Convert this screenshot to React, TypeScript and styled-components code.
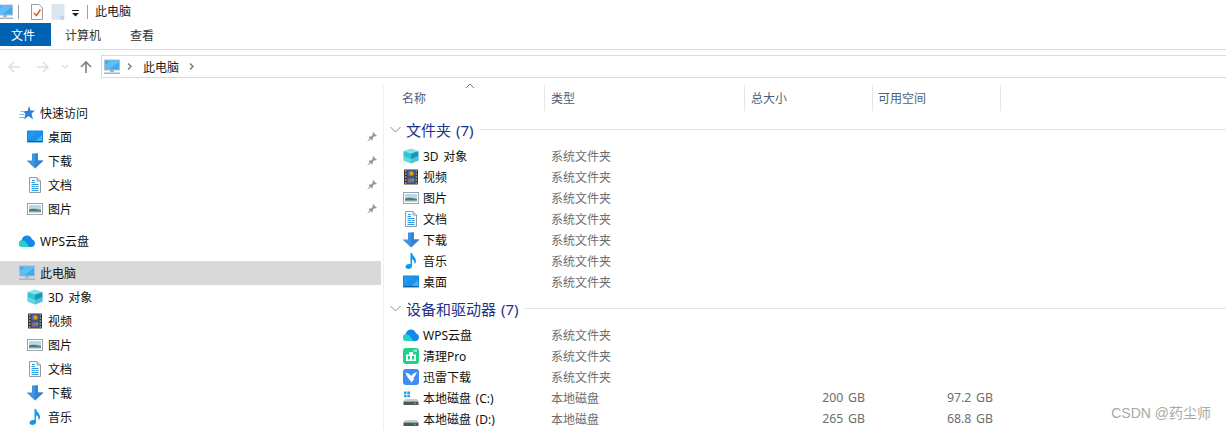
import React from "react";
import styled, { createGlobalStyle } from "styled-components";

const Global = createGlobalStyle`
  html, body { margin: 0; padding: 0; background: #fff; height: 430px; overflow: hidden; }
  body { font-family: "Noto Sans", "Noto Sans CJK SC", sans-serif; font-size: 12px; color: #1a1a1a; }
`;

const Page = styled.div`
  position: relative; width: 1226px; height: 430px; overflow: hidden; background: #fff;
  display: flex; flex-direction: column;
`;
const TitleBar = styled.div`
  height: 23px; display: flex; align-items: center; flex: none;
`;
const TitleSep = styled.span<{ $gap: number }>`
  width: 1px; height: 14px; background: #a0a0a0; margin-left: ${p => p.$gap}px; flex: none;
`;
const QuickIcon = styled.span<{ $gap: number }>`
  margin-left: ${p => p.$gap}px; display: flex; flex: none;
`;
const TitleText = styled.span`
  margin-left: 7px; line-height: 23px; color: #1a1a1a;
`;
const TabBar = styled.div`
  height: 23px; display: flex; flex: none; align-items: stretch;
`;
const FileTab = styled.div`
  width: 51px; box-sizing: border-box; padding-left: 11px; background: #0063b1; color: #fff; display: flex; align-items: center;
`;
const Tab = styled.div<{ $gap: number }>`
  margin-left: ${p => p.$gap}px; display: flex; align-items: center; color: #333;
`;
const RibbonLine = styled.div`
  flex: none; height: 1px; margin-top: 3px; background: #dedede;
`;
const AddressRow = styled.div`
  flex: none; height: 23px; margin-top: 5px; display: flex; align-items: center; 
`;
const NavButton = styled.span<{ $w: number }>`
  width: ${p => p.$w}px; display: flex; justify-content: center; flex: none;
`;
const AddressBox = styled.div`
  flex: 1; height: 23px; box-sizing: border-box; border: 1px solid #d9d9d9; border-right: 0;
  display: flex; align-items: center; padding-left: 2px; margin-left: 0;
`;
const AddressSpacer = styled.span`
  width: 5px; flex: none;
`;
const Crumb = styled.span`
  color: #1a1a1a; margin: 0 8px 0 9px;
`;
const Body = styled.div`
  flex: 1; display: flex; min-height: 0;
`;
const Sidebar = styled.div`
  width: 381px; flex: none; padding-top: 23px; display: flex; flex-direction: column;
`;
const NavGroup = styled.div`
  margin-bottom: 8px; flex: none;
`;
const NavRow = styled.div<{ $level: number; $selected?: boolean }>`
  height: 24px; display: flex; align-items: center; gap: 5px;
  padding-left: ${p => (p.$level ? 27 : 19)}px;
  padding-right: 3px;
  word-spacing: 1.5px;
  background: ${p => (p.$selected ? "#d9d9d9" : "transparent")};
`;
const NavLabel = styled.span`
  flex: 1; color: #111; white-space: nowrap;
`;
const Pane = styled.div`
  flex: 1; margin-left: 2px; margin-top: 7px; border-left: 1px solid #f0f0f0; position: relative;
`;
const Header = styled.div`
  height: 26px; display: flex; padding-left: 18px;
`;
const HeaderCell = styled.div<{ $w: number; $pad?: number }>`
  position: relative; width: ${p => p.$w}px; box-sizing: border-box; padding-left: ${p => p.$pad ?? 5}px;
  border-right: 1px solid #e5e5e5; color: #4c607a; line-height: 28px; white-space: nowrap;
`;
const SortCaret = styled.svg`
  position: absolute; left: 63px; top: -2px;
`;
const GroupHead = styled.div<{ $mt: number }>`
  margin-top: ${p => p.$mt}px; height: 24px; display: flex; align-items: center; padding-left: 6px;
`;
const GroupTitle = styled.span`
  font-size: 15px; color: #1e3287; margin-left: 5px; white-space: nowrap; word-spacing: 1px;
`;
const GroupLine = styled.span`
  flex: 1; height: 1px; background: #e5e5e5; margin-left: 7px;
`;
const FileRows = styled.div<{ $mt: number }>`
  margin-top: ${p => p.$mt}px;
`;
const FileRow = styled.div`
  height: 21px; display: grid; grid-template-columns: 148px 200px 114px 128px;
  padding-left: 19px; align-items: center;
`;
const FileName = styled.span`
  display: flex; align-items: center; gap: 4px; color: #111; white-space: nowrap; word-spacing: 1.5px;
`;
const FileMeta = styled.span<{ $right?: boolean }>`
  color: #6d6d6d; text-align: ${p => (p.$right ? "right" : "left")}; white-space: nowrap; word-spacing: 1.5px;
  font-size: ${p => (p.$right ? "12.3px" : "12px")};
`;
const Watermark = styled.div`
  position: absolute; right: 15px; top: 403px; font-size: 14px; line-height: 20px; color: #a8a8a8;
  font-family: "Liberation Sans", "Noto Sans CJK SC", sans-serif;
`;

const Ico = ({ size = 16, children }: { size?: number; children: React.ReactNode }) => (
  <svg width={size} height={size} viewBox="0 0 16 16" style={{ flex: "none", display: "block" }}>{children}</svg>
);

const Monitor = () => (
  <Ico>
    <rect x="0.5" y="1" width="15" height="10" fill="#3fa9ee" stroke="#a9c2d6" />
    <path d="M1 6 L6 1.5 H15 V3 L5 10.5 H1Z" fill="#62bdf3" />
    <rect x="6" y="11" width="4" height="2" fill="#9fb4c6" />
    <rect x="0" y="13.5" width="16" height="1.5" fill="#a4b4c6" />
  </Ico>
);
const Desktop = () => (
  <Ico>
    <rect x="0" y="1.5" width="16" height="12" rx="0.5" fill="#1386dc" />
    <rect x="1" y="2.5" width="14" height="9.5" fill="#1f9cf0" />
    <path d="M1 12 L10 2.5 H15 V12Z" fill="#1a90e8" />
    <path d="M9 12 L15 6 V12Z" fill="#45b4f5" />
    <rect x="1" y="12" width="14" height="1" fill="#0d5fa3" />
  </Ico>
);
const Down = () => (
  <Ico>
    <path d="M5 0.5 H11 V7.5 H16.5 L8 15.5 L-0.5 7.5 H5Z" fill="#3f92e0" />
    <path d="M8 0.5 H11 V7.5 H16.5 L8 15.5Z" fill="#3584d2" />
  </Ico>
);
const Doc = () => (
  <Ico>
    <path d="M2.5 0.5 H10 L13.5 4 V15.5 H2.5Z" fill="#fbfbfb" stroke="#8f9aa3" />
    <path d="M10 0.5 V4 H13.5" fill="#e0e0e0" stroke="#8f9aa3" />
    <path d="M5 3.5 H8 M4.5 5.5 H8 M4.5 7.5 H11.5 M4.5 9.5 H8 M9 9.5 H11.5 M4.5 11.5 H11.5 M4.5 13.5 H11.5" stroke="#2f9ae0" strokeWidth="1" />
  </Ico>
);
const Picture = () => (
  <Ico>
    <rect x="0.5" y="2.5" width="15" height="11" fill="#fff" stroke="#9aa3aa" />
    <rect x="2" y="4" width="12" height="8" fill="#b9d8ee" />
    <path d="M2 9 C5 7 8 8 14 9 V12 H2Z" fill="#4f7a6c" />
    <rect x="2" y="10.5" width="12" height="1.5" fill="#c3d2da" />
  </Ico>
);
const Cube = () => (
  <Ico>
    <path d="M8 0.5 L15.5 3 L8 5.5 L0.5 3Z" fill="#7fe3ea" />
    <path d="M0.5 3 L8 5.5 V15.5 L0.5 12.5Z" fill="#30c4d6" />
    <path d="M15.5 3 L8 5.5 V15.5 L15.5 12.5Z" fill="#1698bd" />
    <path d="M0.5 8 L8 11 L15.5 8 V12.5 L8 15.5 L0.5 12.5Z" fill="#a5edf0" opacity="0.45" />
  </Ico>
);
const Film = () => (
  <Ico>
    <rect x="1" y="0.5" width="14" height="15" fill="#3a3a3a" />
    <path d="M2 2 H3.5 M2 5 H3.5 M2 8 H3.5 M2 11 H3.5 M2 14 H3.5 M12.5 2 H14 M12.5 5 H14 M12.5 8 H14 M12.5 11 H14 M12.5 14 H14" stroke="#ddd" strokeWidth="1.2" />
    <rect x="4.5" y="1.5" width="7" height="6" fill="#3f6cc4" />
    <rect x="4.5" y="8.5" width="7" height="6" fill="#3f6cc4" />
    <circle cx="8.5" cy="4.5" r="2" fill="#e0a21c" />
    <circle cx="7" cy="11.5" r="2" fill="#d4532c" />
    <circle cx="10" cy="11" r="1.4" fill="#5da745" />
  </Ico>
);
const Note = () => (
  <Ico>
    <path d="M7.5 0 H9 C9.5 3 13 4.5 13 8 C13 9.5 12.3 10.5 11.5 11 C11.8 8.5 10.5 6.8 9 6.3 V13 C9 14.7 7.3 16 5.2 16 C3.5 16 2.5 15 2.5 13.8 C2.5 12.2 4.2 11 6 11 C6.6 11 7.1 11.1 7.5 11.3Z" fill="#0d9af0" />
  </Ico>
);
const Star = () => (
  <Ico>
    <path d="M10 1 L11.5 5.5 H16 L12.5 8.5 L14 14.5 L9.5 11 L5 14.5 L6.5 8.5 L3.5 6 H8.5Z" fill="#2a80d2" />
    <path d="M1.5 6.5 H5.5 M0.5 9.5 H5.5 M0 12.5 H5" stroke="#7ac0ef" strokeWidth="1" />
  </Ico>
);
const Cloud = () => (
  <Ico>
    <path d="M3.5 14 C1.3 14 0 12.4 0 10.5 C0 8.8 1.1 7.5 2.6 7.2 C3.2 4.4 5.4 2.5 8 2.5 C10.5 2.5 12.3 4 13 6.2 C14.8 6.8 16 8.4 16 10.3 C16 12.4 14.4 14 12.4 14Z" fill="#1389e8" />
    <path d="M3.5 14 C1.3 14 0 12.4 0 10.5 C0 8.8 1.1 7.5 2.6 7.2 C5.4 7.2 7.2 8.5 8 10.5 C8.6 12 9.8 13.4 11 14Z" fill="#22d3c5" />
  </Ico>
);
const CleanPro = () => (
  <Ico>
    <rect x="0" y="0" width="16" height="16" rx="3" fill="#1fd08a" />
    <path d="M10.5 1.5 H14 V4 H10.5Z" fill="#8ce9c4" />
    <path d="M6 4 H10 V6.5 H13 V13 H3 V6.5 H6Z M4.8 8 V11.6 H7 V8Z M9 8 V11.6 H11.2 V8Z" fill="#fff" fillRule="evenodd" />
  </Ico>
);
const Thunder = () => (
  <Ico>
    <rect x="0" y="0" width="16" height="16" rx="3" fill="#3f8cf5" />
    <path d="M2.5 3.5 C5 4.2 7 5.2 8.3 7 C9.5 5.2 11.2 3.8 13.8 3 C13 5.5 12 7.5 10.3 9 L11.3 10 L8.5 13.5 C7 10.8 4 8.8 2.5 3.5Z" fill="#fff" />
  </Ico>
);
const DriveBase = () => (
  <>
    <path d="M2 9 H14 L15.5 11.5 H0.5Z" fill="#c6ccd0" />
    <rect x="0.5" y="11.5" width="15" height="3.5" fill="#50565a" />
    <rect x="11" y="12.7" width="2" height="1.2" fill="#37d24a" />
  </>
);
const DriveC = () => (
  <Ico>
    <DriveBase />
    <path d="M1 1.5 H3.5 V4 H1Z M4.3 1.5 H7 V4 H4.3Z M1 4.8 H3.5 V7.2 H1Z M4.3 4.8 H7 V7.2 H4.3Z" fill="#20a4ee" />
  </Ico>
);
const DriveD = () => <Ico><DriveBase /></Ico>;

const Pin = () => (
  <svg width="12" height="12" viewBox="0 0 12 12" style={{ flex: "none", display: "block" }}>
    <path d="M7 1 L11 5 L9.8 5.6 L8.6 5 L6.6 7 L6.6 9 L5.8 9.6 L2.6 6.2 L3.2 5.4 L5 5.4 L7 3.4 L6.4 2.2Z M3.6 7.6 L1 11 L4.4 8.4Z" fill="#8d98a3" />
  </svg>
);
const Chevron = ({ size = 9, color = "#7a7a7a" }: { size?: number; color?: string }) => (
  <svg width={size} height={size} viewBox="0 0 9 9" style={{ flex: "none", display: "block" }}>
    <path d="M3 1.5 L6 4.5 L3 7.5" fill="none" stroke={color} strokeWidth="1.4" />
  </svg>
);
const GroupChevron = () => (
  <svg width="11" height="7" viewBox="0 0 11 7" style={{ flex: "none", display: "block" }}>
    <path d="M0.5 1 L5.5 6 L10.5 1" fill="none" stroke="#8a8a8a" strokeWidth="1" />
  </svg>
);
const Arrow = ({ dir, color }: { dir: "l" | "r" | "u"; color: string }) => (
  <svg width="14" height="14" viewBox="0 0 14 14" style={{ display: "block", transform: dir === "r" ? "rotate(180deg)" : dir === "u" ? "rotate(90deg)" : undefined }}>
    <path d="M13 7 H2 M7 2 L2 7 L7 12" fill="none" stroke={color} strokeWidth="1.6" />
  </svg>
);

const folders: [React.ReactNode, string][] = [
  [<Cube />, "3D 对象"], [<Film />, "视频"], [<Picture />, "图片"], [<Doc />, "文档"],
  [<Down />, "下载"], [<Note />, "音乐"], [<Desktop />, "桌面"],
];
const devices: [React.ReactNode, string, string, string?, string?][] = [
  [<Cloud />, "WPS云盘", "系统文件夹"],
  [<CleanPro />, "清理Pro", "系统文件夹"],
  [<Thunder />, "迅雷下载", "系统文件夹"],
  [<DriveC />, "本地磁盘 (C:)", "本地磁盘", "200 GB", "97.2 GB"],
  [<DriveD />, "本地磁盘 (D:)", "本地磁盘", "265 GB", "68.8 GB"],
];

export default function App() {
  return (
    <Page>
      <Global />
      <TitleBar>
        <QuickIcon $gap={-3}><Monitor /></QuickIcon>
        <TitleSep $gap={5} />
        <QuickIcon $gap={10}>
          <Ico>
            <path d="M2.5 0.5 H10 L13.5 4 V15.5 H2.5Z" fill="#fff" stroke="#9a9a9a" />
            <path d="M5 9 L7.5 11.5 L11.5 5.5" fill="none" stroke="#e0582a" strokeWidth="1.5" />
          </Ico>
        </QuickIcon>
        <QuickIcon $gap={6}>
          <Ico>
            <path d="M1 0.5 H13 V15.5 H1Z" fill="#dbe5f2" stroke="#dfe6f0" />
            <path d="M9.5 12 H13 V15.5 H9.5Z" fill="#c2cfe0" />
          </Ico>
        </QuickIcon>
        <QuickIcon $gap={5}>
          <svg width="8" height="7" viewBox="0 0 8 7" style={{ display: "block", marginTop: 3 }}>
            <path d="M0 0 H7 V1 H0Z M0 3 H7 L3.5 6.5Z" fill="#222" />
          </svg>
        </QuickIcon>
        <TitleSep $gap={7} />
        <TitleText>此电脑</TitleText>
      </TitleBar>
      <TabBar>
        <FileTab>文件</FileTab>
        <Tab $gap={14}>计算机</Tab>
        <Tab $gap={29}>查看</Tab>
      </TabBar>
      <RibbonLine />
      <AddressRow>
        <NavButton $w={28}><Arrow dir="l" color="#e0e0e0" /></NavButton>
        <NavButton $w={30}><Arrow dir="r" color="#e0e0e0" /></NavButton>
        <NavButton $w={13}>
          <svg width="8" height="5" viewBox="0 0 8 5"><path d="M1 1 L4 4 L7 1" fill="none" stroke="#dcdcdc" strokeWidth="1.2" /></svg>
        </NavButton>
        <NavButton $w={30}><Arrow dir="u" color="#808080" /></NavButton>
        <AddressBox>
          <Monitor />
          <AddressSpacer />
          <Chevron />
          <Crumb>此电脑</Crumb>
          <Chevron />
        </AddressBox>
      </AddressRow>
      <Body>
        <Sidebar>
          <NavGroup>
            <NavRow $level={0}><Star /><NavLabel>快速访问</NavLabel></NavRow>
            {[[<Desktop />, "桌面"], [<Down />, "下载"], [<Doc />, "文档"], [<Picture />, "图片"]].map(([i, t], k) => (
              <NavRow $level={1} key={k}>{i}<NavLabel>{t}</NavLabel><Pin /></NavRow>
            ))}
          </NavGroup>
          <NavGroup>
            <NavRow $level={0}><Cloud /><NavLabel>WPS云盘</NavLabel></NavRow>
          </NavGroup>
          <NavRow $level={0} $selected><Monitor /><NavLabel>此电脑</NavLabel></NavRow>
          {folders.slice(0, 6).map(([i, t]) => (
            <NavRow $level={1} key={t}>{i}<NavLabel>{t}</NavLabel></NavRow>
          ))}
        </Sidebar>
        <Pane>
          <Header>
            <HeaderCell $w={143} $pad={0}>名称
              <SortCaret width="10" height="6" viewBox="0 0 10 6"><path d="M1 5 L5 1 L9 5" fill="none" stroke="#777" strokeWidth="1" /></SortCaret>
            </HeaderCell>
            <HeaderCell $w={200} $pad={6}>类型</HeaderCell>
            <HeaderCell $w={128} $pad={6}>总大小</HeaderCell>
            <HeaderCell $w={128} $pad={5}>可用空间</HeaderCell>
          </Header>
          <GroupHead $mt={6}><GroupChevron /><GroupTitle>文件夹 (7)</GroupTitle><GroupLine /></GroupHead>
          <FileRows $mt={4}>
            {folders.map(([i, t]) => (
              <FileRow key={t}>
                <FileName>{i}{t}</FileName>
                <FileMeta>系统文件夹</FileMeta>
              </FileRow>
            ))}
          </FileRows>
          <GroupHead $mt={4}><GroupChevron /><GroupTitle>设备和驱动器 (7)</GroupTitle><GroupLine /></GroupHead>
          <FileRows $mt={4}>
            {devices.map(([i, t, k, a, b]) => (
              <FileRow key={t}>
                <FileName>{i}{t}</FileName>
                <FileMeta>{k}</FileMeta>
                <FileMeta $right>{a}</FileMeta>
                <FileMeta $right>{b}</FileMeta>
              </FileRow>
            ))}
          </FileRows>
        </Pane>
      </Body>
      <Watermark>CSDN @药尘师</Watermark>
    </Page>
  );
}
